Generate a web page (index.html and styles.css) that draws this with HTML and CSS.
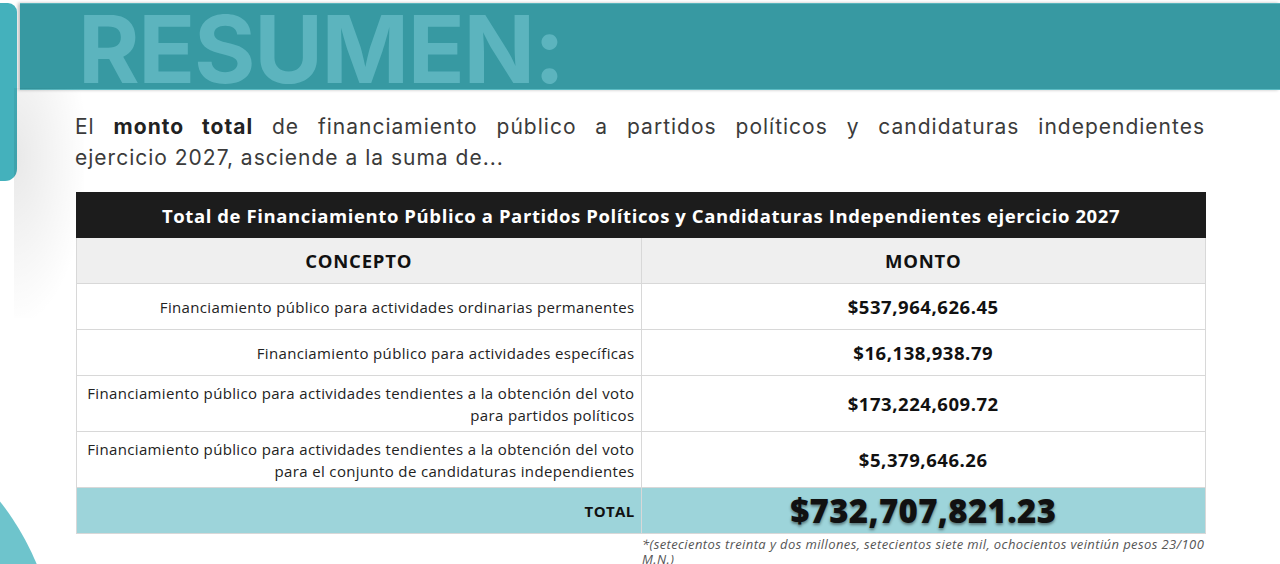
FILE: index.html
```html
<!DOCTYPE html>
<html lang="es">
<head>
<meta charset="utf-8">
<title>Resumen</title>
<link rel="stylesheet" href="styles.css">
</head>
<body>
<div class="page">
  <div class="side-bar"></div>
  <div class="side-shadow"></div>
  <div class="corner-circle"></div>

  <header class="banner">
    <h1 class="banner-title">RESUMEN:</h1>
  </header>

  <main class="content">
    <p class="intro"><span class="intro-first">El <b>monto total</b> de financiamiento público a partidos políticos y candidaturas independientes</span>ejercicio 2027, asciende a la suma de...</p>

    <table class="summary">
      <thead>
        <tr class="row-title">
          <th colspan="2">Total de Financiamiento Público a Partidos Políticos y Candidaturas Independientes ejercicio 2027</th>
        </tr>
        <tr class="row-head">
          <th>CONCEPTO</th>
          <th>MONTO</th>
        </tr>
      </thead>
      <tbody>
        <tr class="row-std">
          <td class="concept">Financiamiento público para actividades ordinarias permanentes</td>
          <td class="amount">$537,964,626.45</td>
        </tr>
        <tr class="row-std">
          <td class="concept">Financiamiento público para actividades específicas</td>
          <td class="amount">$16,138,938.79</td>
        </tr>
        <tr class="row-tall">
          <td class="concept">Financiamiento público para actividades tendientes a la obtención del voto<br>para partidos políticos</td>
          <td class="amount">$173,224,609.72</td>
        </tr>
        <tr class="row-tall">
          <td class="concept">Financiamiento público para actividades tendientes a la obtención del voto<br>para el conjunto de candidaturas independientes</td>
          <td class="amount">$5,379,646.26</td>
        </tr>
        <tr class="row-total">
          <td class="concept total-label">TOTAL</td>
          <td class="amount total-amount">$732,707,821.23</td>
        </tr>
      </tbody>
    </table>

    <p class="footnote">*(setecientos treinta y dos millones, setecientos siete mil, ochocientos veintiún pesos 23/100 M.N.)</p>
  </main>
</div>
</body>
</html>
```

FILE: styles.css
```css
* { box-sizing: border-box; }

html, body {
  margin: 0;
  padding: 0;
  background: #ffffff;
}

.page {
  position: relative;
  width: 1280px;
  height: 564px;
  overflow: hidden;
  background: #ffffff;
  padding-top: 3px;
}

/* decorative shapes */
.side-bar {
  position: absolute;
  left: 0;
  top: 3px;
  width: 17px;
  height: 178px;
  background: #44b1bc;
  border-radius: 0 9px 12px 0;
}

.side-shadow {
  position: absolute;
  left: 14px;
  top: 88px;
  width: 70px;
  height: 230px;
  background: radial-gradient(ellipse at 0% 30%, rgba(0, 0, 0, 0.09) 0%, rgba(0, 0, 0, 0.035) 45%, rgba(0, 0, 0, 0) 75%);
}

.corner-circle {
  position: absolute;
  left: -460px;
  top: 404px;
  width: 516px;
  height: 516px;
  border-radius: 50%;
  background: #6ec4cc;
}

/* banner */
.banner {
  margin-left: 20px;
  height: 87px;
  background: #3799a2;
  border-top: 1px solid #58b4bc;
  border-bottom: 1px solid #5cbcc4;
  padding-left: 58px;
  box-shadow: -2px 0 3px rgba(0, 0, 0, 0.25);
}

.banner-title {
  margin: 0;
  font-family: Inter, "Noto Sans", sans-serif;
  font-weight: 700;
  font-size: 94px;
  line-height: 91px;
  letter-spacing: -1.4px;
  color: #5cb4be;
}

/* content */
.content {
  padding: 0 75px 0 75px;
}

.intro {
  margin: 21px 0 0 0;
  font-family: Inter, "Noto Sans", sans-serif;
  font-size: 21px;
  line-height: 31px;
  letter-spacing: 1px;
  color: #3b3b3b;
  text-align: justify;
}

.intro b {
  font-weight: 700;
  color: #222;
}

.intro-first {
  display: block;
  text-align: justify;
  text-align-last: justify;
}

.summary {
  margin: 19px 0 0 1px;
  width: 1130px;
  border-collapse: collapse;
  table-layout: fixed;
  font-family: "Open Sans", "Noto Sans", sans-serif;
  color: #111;
}

.summary th,
.summary td {
  border: 1px solid #d8d8d8;
  padding: 0 6px;
}

.row-title th {
  height: 45px;
  background: #1c1c1c;
  border-color: #1c1c1c;
  color: #ffffff;
  font-size: 18.5px;
  letter-spacing: 0.6px;
  font-weight: 700;
  text-align: center;
}

.row-head th {
  height: 46px;
  background: #efefef;
  font-size: 18.5px;
  letter-spacing: 0.8px;
  font-weight: 700;
  text-align: center;
  width: 50%;
}

.row-std td { height: 46px; }
.row-tall td { height: 56px; }

.concept {
  text-align: right;
  font-size: 15px;
  letter-spacing: 0.35px;
  line-height: 22px;
  color: #222;
}

.amount {
  text-align: center;
  font-size: 18.5px;
  letter-spacing: 0.55px;
  font-weight: 700;
}

.row-total td {
  height: 46px;
  background: #9dd4da;
}

.total-label {
  font-weight: 700;
  color: #111;
}

.total-amount {
  font-size: 33px;
  font-weight: 800;
  color: #111;
  text-shadow: 0 2px 3px rgba(0, 0, 0, 0.45);
  letter-spacing: 0.3px;
}

.footnote {
  margin: 3px 0 0 567px;
  width: 580px;
  font-family: "Open Sans", "Noto Sans", sans-serif;
  font-style: italic;
  font-size: 13px;
  letter-spacing: 0.4px;
  line-height: 15px;
  color: #555;
}
```
